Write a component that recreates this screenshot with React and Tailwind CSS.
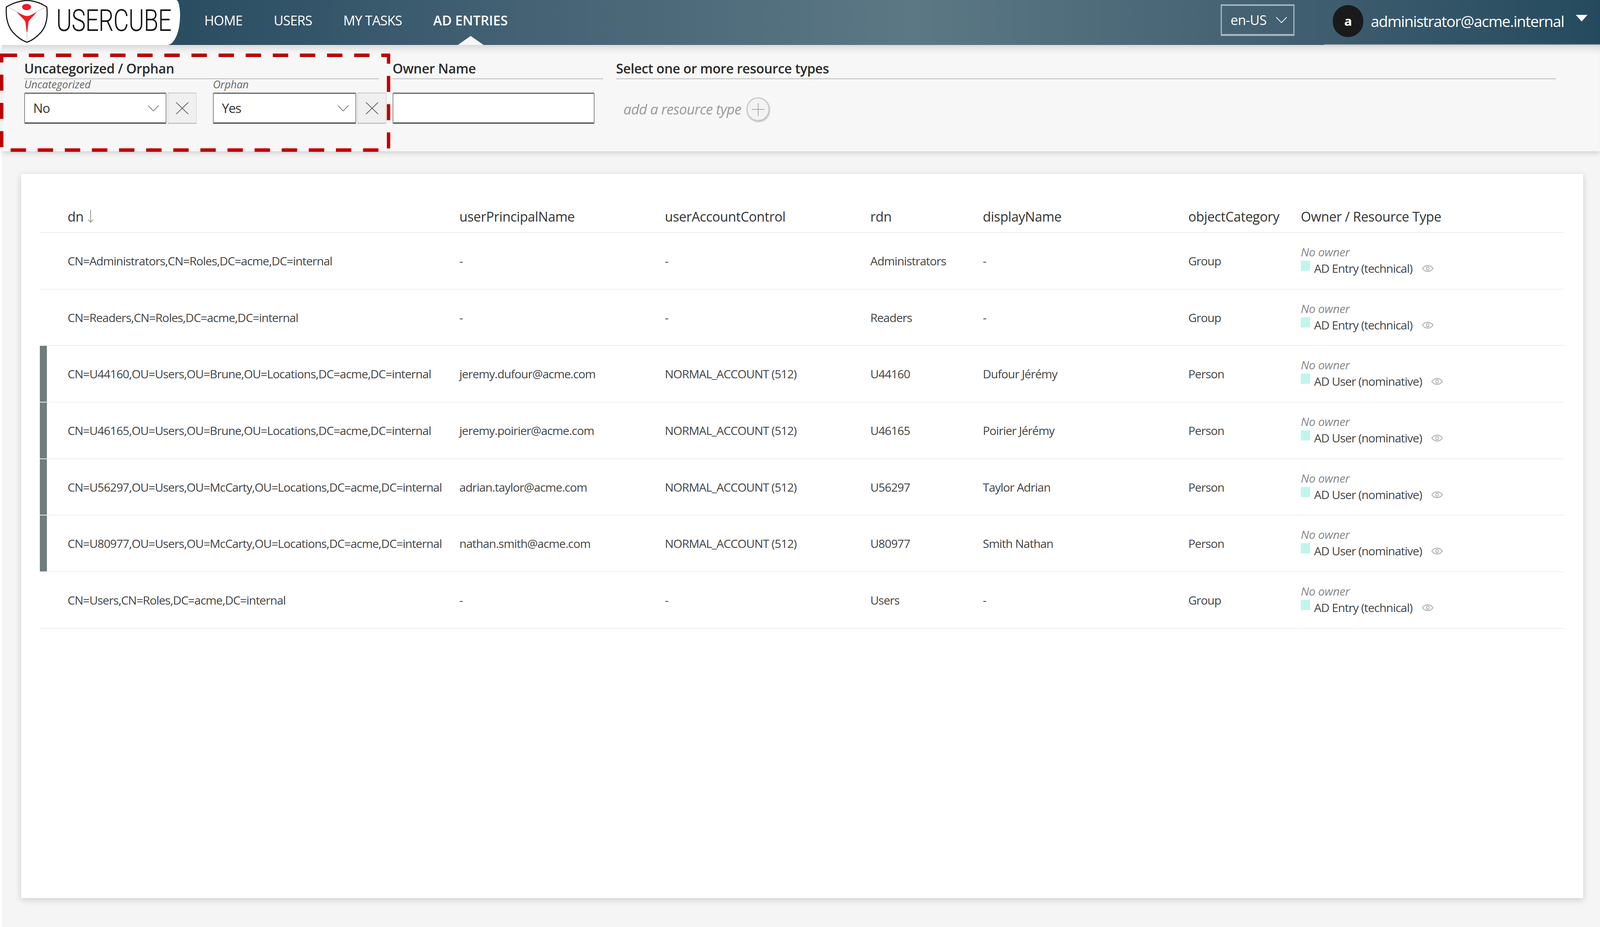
import React from "react";

const rows = [
  { dn: "CN=Administrators,CN=Roles,DC=acme,DC=internal", upn: "-", uac: "-", rdn: "Administrators", name: "-", cat: "Group", type: "AD Entry (technical)" },
  { dn: "CN=Readers,CN=Roles,DC=acme,DC=internal", upn: "-", uac: "-", rdn: "Readers", name: "-", cat: "Group", type: "AD Entry (technical)" },
  { dn: "CN=U44160,OU=Users,OU=Brune,OU=Locations,DC=acme,DC=internal", upn: "jeremy.dufour@acme.com", uac: "NORMAL_ACCOUNT (512)", rdn: "U44160", name: "Dufour Jérémy", cat: "Person", type: "AD User (nominative)", bar: true },
  { dn: "CN=U46165,OU=Users,OU=Brune,OU=Locations,DC=acme,DC=internal", upn: "jeremy.poirier@acme.com", uac: "NORMAL_ACCOUNT (512)", rdn: "U46165", name: "Poirier Jérémy", cat: "Person", type: "AD User (nominative)", bar: true },
  { dn: "CN=U56297,OU=Users,OU=McCarty,OU=Locations,DC=acme,DC=internal", upn: "adrian.taylor@acme.com", uac: "NORMAL_ACCOUNT (512)", rdn: "U56297", name: "Taylor Adrian", cat: "Person", type: "AD User (nominative)", bar: true },
  { dn: "CN=U80977,OU=Users,OU=McCarty,OU=Locations,DC=acme,DC=internal", upn: "nathan.smith@acme.com", uac: "NORMAL_ACCOUNT (512)", rdn: "U80977", name: "Smith Nathan", cat: "Person", type: "AD User (nominative)", bar: true },
  { dn: "CN=Users,CN=Roles,DC=acme,DC=internal", upn: "-", uac: "-", rdn: "Users", name: "-", cat: "Group", type: "AD Entry (technical)" },
];

const Chevron = ({ className }) => (
  <svg viewBox="0 0 30 16" preserveAspectRatio="none" className={className} fill="none" stroke="currentColor" strokeWidth="1.8">
    <polyline points="1,1 15,15 29,1" />
  </svg>
);

const Eye = () => (
  <svg viewBox="0 0 31 18" preserveAspectRatio="none" className="ml-[24px] h-[18px] w-[30px] text-[#b5b5b5]" fill="none" stroke="currentColor" strokeWidth="2.5">
    <path d="M1.5 9C6 3 11 1.5 15.5 1.5S25 3 29.5 9C25 15 20 16.5 15.5 16.5S6 15 1.5 9Z" />
    <ellipse cx="15.5" cy="9" rx="3.5" ry="4" />
  </svg>
);

const Logo = () => (
  <svg viewBox="0 0 145 112" preserveAspectRatio="none" className="h-[112px] w-[139px] shrink-0">
    <path d="M72 1C90 2 110 8 125 18C128 45 124 66 110 82C99 94 85 104 72 108C59 104 45 94 34 82C20 66 15 45 17 18C33 8 54 2 72 1Z" fill="#fff" stroke="#1a1a1a" strokeWidth="3" />
    <path d="M23 19L48 31M120 19L96 31M72 80V107" stroke="#d9d9d9" strokeWidth="2" fill="none" />
    <ellipse cx="71" cy="18" rx="12" ry="8" fill="#ee1c25" />
    <path d="M45 30C55 36 65 41 72 41C79 41 89 36 98 30C90 42 80 48 76 56L73 82H71L68 56C64 48 53 42 45 30Z" fill="#ee1c25" />
  </svg>
);

const SelectFilter = ({ label, value, width, className }) => (
  <div className={className}>
    <div className="h-[34px] text-[27px] leading-[26px] italic tracking-[-0.1px] text-[#666]">{label}</div>
    <div className="flex h-[80px] gap-[3px]">
      <div className={`${width} flex items-center justify-between rounded-[3px] border-x-2 border-t-[3px] border-b-[4px] border-x-[#8a8a8a] border-t-[#666] border-b-[#666] bg-white pl-[21px] pr-[17px]`}>
        <span className="text-[33px] tracking-[-1.2px] text-[#333]">{value}</span>
        <Chevron className="h-[16px] w-[29px] text-[#777]" />
      </div>
      <div className="flex w-[74px] items-center justify-center border-x border-t-2 border-b-[3px] border-[#c4c4c4] bg-[#f0f0f0]">
        <svg viewBox="0 0 34 32" preserveAspectRatio="none" className="h-[32px] w-[33px] text-[#666]" fill="none" stroke="currentColor" strokeWidth="2">
          <path d="M1 1L33 31M33 1L1 31" />
        </svg>
      </div>
    </div>
  </div>
);

const Heading = ({ children }) => (
  <div className="h-[88px] border-b-[3px] border-[#cfcfcf] pt-[37px] text-[34px] leading-[46px] font-semibold tracking-[-0.45px] whitespace-nowrap text-[#2b2b2b]">
    {children}
  </div>
);

const colClass = "grid grid-cols-[1074px_526px_526px_288px_526px_288px_1fr]";

export default function App() {
  return (
    <div className="relative h-[2372px] w-full overflow-hidden bg-white font-['Open_Sans',sans-serif]">
      <header className="relative z-20 flex h-[115px] items-stretch bg-[linear-gradient(90deg,#2a4d62_11%,#446274_33%,#5c7885_57%,#426071_80%,#254a5e_100%)]">
        <div className="flex w-[461px] shrink-0 items-start gap-[5px] rounded-[0_15px_50px_0/0_60px_115px_0] bg-white">
          <Logo />
          <span className="mt-[7px] origin-left scale-x-[0.78] text-[78px] leading-[92px] font-light tracking-[-1px] text-[#111] font-['Roboto',sans-serif]">USERCUBE</span>
        </div>
        <nav className="ml-[62px] flex items-start gap-[80px] pt-[29px] text-[34px] leading-[46px] tracking-[-0.8px] text-white">
          <span>HOME</span>
          <span>USERS</span>
          <span>MY TASKS</span>
          <span className="relative font-semibold tracking-normal">
            AD ENTRIES
            <span className="absolute left-[63px] top-[63px] h-0 w-0 border-x-[33px] border-b-[23px] border-x-transparent border-b-[#f7f7f7]" />
          </span>
        </nav>
        <div className="ml-auto flex items-start">
          <div className="mt-[11px] flex h-[81px] w-[189px] items-center justify-between border-x-[3px] border-t-[4px] border-b-[5px] border-[#a3b6bf] pl-[22px] pr-[16px] text-[34px] tracking-[-0.4px] text-white">
            <span>en-US</span>
            <Chevron className="h-[16px] w-[29px] text-white" />
          </div>
          <div className="ml-[76px] flex items-start self-stretch border-b-2 border-[#8f9a9f] pl-[22px]">
            <div className="mt-[13px] flex h-[82px] w-[78px] items-center justify-center rounded-full bg-[#1a1a1a] text-[33px] font-bold text-white">a</div>
            <span className="ml-[19px] mt-[28px] text-[39px] leading-[52px] tracking-[-1.42px] text-white">administrator@acme.internal</span>
            <div className="ml-[30px] mr-[32px] mt-[38px] h-0 w-0 border-x-[15px] border-t-[17px] border-x-transparent border-t-white" />
          </div>
        </div>
      </header>

      <main className="ml-[5px] flex h-[2257px] flex-col bg-[#f5f5f5]">
        <section className="relative z-10 flex h-[272px] shrink-0 bg-[#f7f7f7] pl-[57px] pr-[113px] shadow-[0_4px_14px_rgba(0,0,0,0.16),inset_0_22px_22px_-16px_rgba(0,0,0,0.16)]">
          <div className="w-[908px] shrink-0">
            <Heading>Uncategorized / Orphan</Heading>
            <div className="flex">
              <SelectFilter label="Uncategorized" value="No" width="w-[364px]" className="w-[483px] shrink-0" />
              <SelectFilter label="Orphan" value="Yes" width="w-[367px]" className="w-[444px] shrink-0" />
            </div>
          </div>
          <div className="ml-[35px] w-[539px] shrink-0">
            <Heading>Owner Name</Heading>
            <div className="mt-[34px] h-[80px] w-[517px] rounded-[3px] border-x-2 border-t-[3px] border-b-[4px] border-x-[#8a8a8a] border-t-[#666] border-b-[#666] bg-white" />
          </div>
          <div className="ml-[33px] flex-1">
            <Heading>Select one or more resource types</Heading>
            <div className="mt-[46px] flex items-center pl-[19px]">
              <span className="text-[36px] italic tracking-[-0.7px] text-[#9a9a9a]">add a resource type</span>
              <span className="ml-[14px] flex h-[61px] w-[59px] items-center justify-center rounded-full border-[3px] border-[#c9c9c9] bg-[#f3f3f3] shadow-[1px_2px_3px_rgba(0,0,0,0.25)]">
                <svg viewBox="0 0 32 32" className="h-[32px] w-[32px] text-[#aaa]" fill="none" stroke="currentColor" strokeWidth="2">
                  <path d="M16 0V32M0 16H32" />
                </svg>
              </span>
            </div>
          </div>
        </section>

        <section className="ml-[49px] mr-[43px] mt-[58px] h-[1853px] shrink-0 bg-white pl-[48px] pr-[50px] shadow-[0_4px_16px_rgba(0,0,0,0.18)]">
          <div className={`${colClass} h-[151px] items-end border-b-2 border-[#ececec] pb-[17px] text-[34px] leading-[46px] font-medium tracking-[-0.4px] text-[#333]`}>
            <div className="flex items-center pl-[71px]">
              dn
              <svg viewBox="0 0 16 34" className="ml-[10px] h-[34px] w-[16px] text-[#999]" fill="none" stroke="currentColor" strokeWidth="2">
                <path d="M8 0V32M2 25L8 32L14 25" />
              </svg>
            </div>
            <div>userPrincipalName</div>
            <div>userAccountControl</div>
            <div>rdn</div>
            <div>displayName</div>
            <div>objectCategory</div>
            <div>Owner / Resource Type</div>
          </div>
          {rows.map((r) => (
            <div key={r.dn} className={`${colClass} h-[144.7px] items-center border-b-2 border-[#efefef] text-[30px] tracking-[-1px] whitespace-nowrap text-[#444]`}>
              <div className="flex h-full items-center">
                <div className={`h-full w-[18px] shrink-0 ${r.bar ? "bg-[#6f7d7c]" : ""}`} />
                <span className="ml-[53px]">{r.dn}</span>
              </div>
              <div>{r.upn}</div>
              <div>{r.uac}</div>
              <div>{r.rdn}</div>
              <div>{r.name}</div>
              <div>{r.cat}</div>
              <div className="flex flex-col">
                <span className="text-[30px] leading-[38px] italic tracking-[-0.4px] text-[#888]">No owner</span>
                <div className="mt-[1px] flex items-center leading-[44px]">
                  <span className="mb-[14px] h-[26px] w-[24px] shrink-0 bg-[#c0f5ee]" />
                  <span className="ml-[10px]">{r.type}</span>
                  <Eye />
                </div>
              </div>
            </div>
          ))}
        </section>
      </main>

      <svg className="pointer-events-none absolute left-0 top-[137px] z-30 h-[252px] w-[1000px]" viewBox="0 0 1041 252" preserveAspectRatio="none" fill="none">
        <path d="M4.5 4.5H1035.5V247H4.5Z" stroke="#c00000" strokeWidth="9" strokeDasharray="41 31.25" />
      </svg>
    </div>
  );
}
